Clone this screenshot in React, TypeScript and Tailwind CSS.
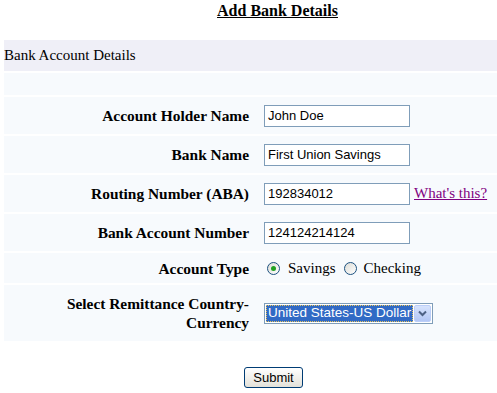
import React from 'react'

const serif = { fontFamily: '"Liberation Serif", "Times New Roman", serif' }
const sans = { fontFamily: '"Liberation Sans", Arial, sans-serif' }

function TextBox({ value }: { value: string }) {
  return (
    <div
      className="flex h-[22px] w-[146px] items-center border border-[#7f9db9] bg-white pl-[3px] text-[13px] text-black"
      style={sans}
    >
      {value}
    </div>
  )
}

function Radio({ checked }: { checked?: boolean }) {
  return (
    <span className="flex h-[13px] w-[13px] items-center justify-center rounded-full border border-[#1c5180] bg-gradient-to-br from-[#dcdcd6] to-white">
      {checked && <span className="h-[5px] w-[5px] rounded-full bg-[#21a121]" />}
    </span>
  )
}

function Row({ label, h, children }: { label: React.ReactNode; h: string; children?: React.ReactNode }) {
  return (
    <div className={`grid grid-cols-[247px_1fr] items-center bg-[#f7fafd] ${h}`}>
      <div className="pr-[2px] text-right text-[15.4px] font-bold leading-[19px] text-black" style={serif}>
        {label}
      </div>
      <div className="flex items-center pl-[13px]">{children}</div>
    </div>
  )
}

export default function App() {
  return (
    <div className="h-[393px] w-[497px] overflow-hidden bg-white" style={serif}>
      {/* Title */}
      <div className="flex justify-center pl-[58px] pt-[1px]">
        <h1 className="text-[16px] font-bold leading-[20px] text-black underline">Add Bank Details</h1>
      </div>

      {/* Table */}
      <div className="mt-[19px] flex flex-col gap-[2px] pl-[4px]">
        <div className="flex h-[31px] items-center bg-[#efeff7] text-[15px] text-black">Bank Account Details</div>
        <div className="h-[22px] bg-[#f7fafd]" />

        <Row label="Account Holder Name" h="h-[37px]">
          <TextBox value="John Doe" />
        </Row>
        <Row label="Bank Name" h="h-[37px]">
          <TextBox value="First Union Savings" />
        </Row>
        <Row label="Routing Number (ABA)" h="h-[37px]">
          <TextBox value="192834012" />
          <a href="#" className="ml-[4px] text-[15px] text-[#800080] underline" style={serif}>
            What's this?
          </a>
        </Row>
        <Row label="Bank Account Number" h="h-[37px]">
          <TextBox value="124124214124" />
        </Row>
        <Row label="Account Type" h="h-[30px]">
          <div className="flex items-center pl-[3px] text-[15px] text-black" style={serif}>
            <Radio checked />
            <span className="ml-[8px]">Savings</span>
            <span className="ml-[8px]">
              <Radio />
            </span>
            <span className="ml-[7px]">Checking</span>
          </div>
        </Row>
        <Row
          label={
            <>
              Select Remittance Country-
              <br />
              Currency
            </>
          }
          h="h-[56px]"
        >
          <div className="flex h-[21px] w-[169px] items-center border border-[#7f9db9] bg-white p-[1px]">
            <div
              className="flex h-full flex-1 items-center border border-dotted border-[#e6c35c] bg-[#316ac5] pl-[1px] text-[13.5px] text-white"
              style={sans}
            >
              United States-US Dollar
            </div>
            <div className="ml-[1px] flex h-full w-[17px] items-center justify-center rounded-[2px] border border-[#bccef8] bg-gradient-to-b from-[#d7e3fd] to-[#b3c7f5]">
              <svg width="9" height="7" viewBox="0 0 9 7">
                <path d="M1 1.5 L4.5 5 L8 1.5" fill="none" stroke="#4d6185" strokeWidth="2" />
              </svg>
            </div>
          </div>
        </Row>
      </div>

      {/* Submit */}
      <div className="mt-[26px] flex pl-[244px]">
        <button
          className="flex h-[21px] w-[59px] items-center justify-center rounded-[3px] border border-[#003c74] bg-gradient-to-b from-white to-[#e3e1d9] text-[13px] text-black"
          style={sans}
        >
          Submit
        </button>
      </div>
    </div>
  )
}
